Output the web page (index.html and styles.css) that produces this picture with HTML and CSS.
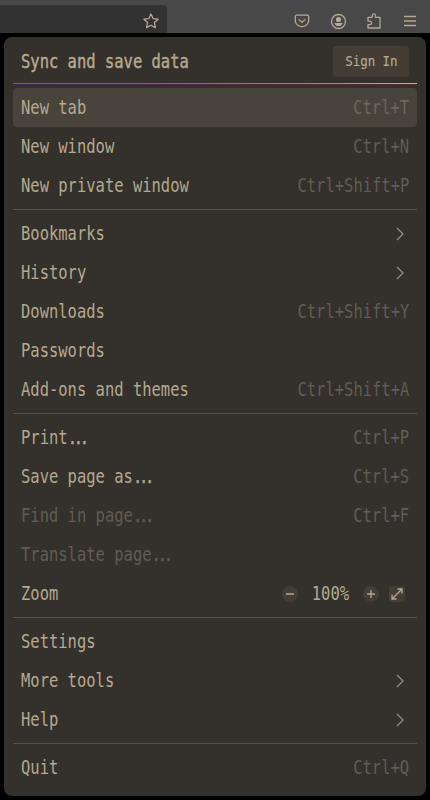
FILE: index.html
```html
<!DOCTYPE html>
<html lang="en">
<head>
<meta charset="utf-8">
<title>Application menu</title>
<link rel="stylesheet" href="styles.css">
</head>
<body>
<header class="toolbar">
  <div class="urlbar"><svg class="icon" viewBox="0 0 16 16"><path d="M8 1l2.1 4.6 5 .6-3.700 3.400 1 5L8 12.200l-4.400 2.400 1-5L.9 6.200l5-.6z"/></svg></div>
  <div class="actions">
    <svg class="icon" viewBox="0 0 16 16"><path d="M2.600 2.200h10.800a1.300 1.300 0 0 1 1.300 1.300V7.500a6.700 6.200 0 0 1-13.400 0V3.500a1.300 1.300 0 0 1 1.300-1.300zM4.800 6.400L8 9.400l3.200-3"/></svg>
    <svg class="icon" viewBox="0 0 16 16"><circle cx="8.500" cy="8.500" r="7"/><circle class="solid" cx="8.500" cy="6.500" r="2.600"/><path class="solid" d="M4.300 10h8.400c-.5 2-2.200 3.100-4.200 3.100s-3.700-1.100-4.200-3.100z"/></svg>
    <svg class="icon" viewBox="0 0 16 16"><path d="M2 6.800V4.300h4.300V2.500a1.600 1.600 0 0 1 3.200 0v1.800H14V15H2v-3.300h1.800a1.700 1.700 0 0 0 0-3.500H2z"/></svg>
    <svg class="icon" viewBox="0 0 16 16"><path d="M2 3.500h12M2 8h12M2 12.500h12"/></svg>
  </div>
</header>
<main class="menu">
  <div class="account"><span class="label strong">Sync and save data</span><button class="signin"><span>Sign In</span></button></div>
  <div class="rainbow"></div>
  <div class="row active"><span class="label">New tab</span><span class="key">Ctrl+T</span></div>
  <div class="row"><span class="label">New window</span><span class="key">Ctrl+N</span></div>
  <div class="row"><span class="label">New private window</span><span class="key">Ctrl+Shift+P</span></div>
  <hr>
  <div class="row"><span class="label">Bookmarks</span><svg class="chevron" viewBox="0 0 16 16"><path d="M5 2l6 6-6 6"/></svg></div>
  <div class="row"><span class="label">History</span><svg class="chevron" viewBox="0 0 16 16"><path d="M5 2l6 6-6 6"/></svg></div>
  <div class="row"><span class="label">Downloads</span><span class="key">Ctrl+Shift+Y</span></div>
  <div class="row"><span class="label">Passwords</span></div>
  <div class="row"><span class="label">Add-ons and themes</span><span class="key">Ctrl+Shift+A</span></div>
  <hr>
  <div class="row"><span class="label">Print<span class="dots">...</span></span><span class="key">Ctrl+P</span></div>
  <div class="row"><span class="label">Save page as<span class="dots">...</span></span><span class="key">Ctrl+S</span></div>
  <div class="row disabled"><span class="label">Find in page<span class="dots">...</span></span><span class="key">Ctrl+F</span></div>
  <div class="row disabled"><span class="label">Translate page<span class="dots">...</span></span></div>
  <div class="row"><span class="label">Zoom</span>
    <div class="zoom">
      <svg class="round" viewBox="0 0 16 16"><path d="M4 8h8"/></svg>
      <span class="percent"><span>100%</span></span>
      <svg class="round" viewBox="0 0 16 16"><path d="M4 8h8M8 4v8"/></svg>
      <svg class="round square" viewBox="0 0 16 16"><path d="M3 13L13 3M8.500 3H13v4.500M3 8.500V13h4.500"/></svg>
    </div>
  </div>
  <hr>
  <div class="row"><span class="label">Settings</span></div>
  <div class="row"><span class="label">More tools</span><svg class="chevron" viewBox="0 0 16 16"><path d="M5 2l6 6-6 6"/></svg></div>
  <div class="row"><span class="label">Help</span><svg class="chevron" viewBox="0 0 16 16"><path d="M5 2l6 6-6 6"/></svg></div>
  <hr>
  <div class="row"><span class="label">Quit</span><span class="key">Ctrl+Q</span></div>
</main>
</body>
</html>
```
FILE: styles.css
```css
* { box-sizing: border-box; }
body {
  margin: 0;
  height: 800px;
  overflow: hidden;
  background: #000;
  color: #b5a98e;
  font: 18.6px/39px "DejaVu Sans Mono", monospace;
}
svg { display: block; fill: none; stroke: currentColor; }
.toolbar {
  height: 33px;
  padding-top: 5px;
  display: flex;
  justify-content: space-between;
  background: #484848;
}
.urlbar {
  width: 167px;
  height: 28px;
  padding: 8px 8px 0 0;
  display: flex;
  justify-content: flex-end;
  background: #323232;
  border-top-right-radius: 4px;
}
.actions { display: flex; gap: 20px; padding: 8px 12px 0 0; }
.icon { width: 16px; height: 16px; stroke-width: 1.3; stroke-linejoin: round; overflow: visible; }
.solid { fill: currentColor; stroke: none; }
.menu {
  margin: 4px 4px 0;
  height: 759px;
  padding: 0 9px;
  background: #34302c;
  border-radius: 8px;
}
.account {
  height: 46px;
  padding: 3px 8px 0;
  display: flex;
  align-items: center;
  justify-content: space-between;
}
.label, .key, .percent span, .signin span {
  display: inline-block;
  white-space: pre;
  transform: scaleX(.833);
  transform-origin: left;
}
.key { color: #625c52; transform-origin: right; }
.strong { -webkit-text-stroke: .45px currentColor; }
.dots { letter-spacing: -3.900px; -webkit-text-stroke: .4px currentColor; }
.signin {
  width: 76px;
  height: 31px;
  padding: 0;
  border: 0;
  border-radius: 4px;
  background: #433d36;
  color: inherit;
  font: 14.900px/31px "DejaVu Sans Mono", monospace;
  display: flex;
  justify-content: center;
}
.signin span { transform-origin: center; -webkit-text-stroke: .2px currentColor; }
.rainbow {
  height: 2px;
  margin-bottom: 3px;
  background:
    linear-gradient(90deg, #6a5cae, #8a5594 25%, #b05a7e 50%, #bb7872 75%, #cfae76) top / 100% 1px no-repeat,
    linear-gradient(90deg, #352750, #45264a 30%, #52283c 60%, #4c3020) bottom / 100% 1px no-repeat;
}
.row {
  height: 39px;
  padding: 0 8px;
  display: flex;
  align-items: center;
  justify-content: space-between;
  border-radius: 4px;
}
.active { background: #48433b; }
.active .key { color: #6d665a; }
.disabled { color: #625c52; }
hr { height: 1px; margin: 4px 0; border: 0; background: #56514b; }
.chevron { width: 16px; height: 16px; margin-right: 1px; color: #999184; stroke-width: 1.200; }
.zoom { display: flex; align-items: center; padding-right: 4px; }
.round { width: 16px; height: 16px; border-radius: 50%; background: #433d36; stroke-width: 1.300; }
.square { border-radius: 2px; margin-left: 10px; }
.percent { width: 65px; display: flex; justify-content: center; }
.percent span { transform-origin: center; }
```
